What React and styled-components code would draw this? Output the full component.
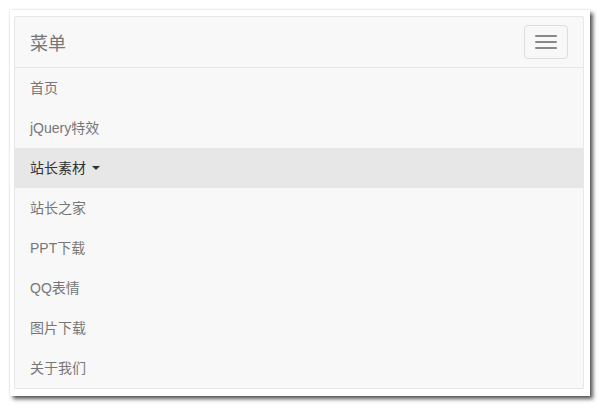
import styled, { createGlobalStyle } from 'styled-components';

const GlobalStyle = createGlobalStyle`
  html, body {
    margin: 0;
    padding: 0;
    background: #fff;
  }
  body {
    font-family: "Liberation Sans", Arial, "Noto Sans CJK SC", sans-serif;
    font-size: 14px;
    line-height: 20px;
    color: #333;
  }
`;

const items = ['首页', 'jQuery特效', '站长素材', '站长之家', 'PPT下载', 'QQ表情', '图片下载', '关于我们'];

export default function App() {
  return (
    <>
      <GlobalStyle />
      <Page>
        <Frame>
          <Navbar>
            <Header>
              <Brand>菜单</Brand>
              <Toggle aria-label="toggle">
                <Bar />
                <Bar />
                <Bar />
              </Toggle>
            </Header>
            <Nav>
              {items.map((label) => (
                <Item key={label} active={label === '站长素材'}>
                  {label}
                  {label === '站长素材' && <Caret />}
                </Item>
              ))}
            </Nav>
          </Navbar>
        </Frame>
      </Page>
    </>
  );
}

const Page = styled.div`
  padding: 10px;
  width: 601px;
  height: 407px;
  box-sizing: border-box;
`;

const Frame = styled.div`
  width: 580px;
  height: 386px;
  box-sizing: border-box;
  background: #fff;
  padding: 6px 6px 0 4px;
  box-shadow: 0 0 2px rgba(0, 0, 0, 0.15), 3px 3px 4px rgba(0, 0, 0, 0.65);
`;

const Navbar = styled.div`
  background: #f8f8f8;
  border: 1px solid #e7e7e7;
  border-radius: 2px;
`;

const Header = styled.div`
  height: 50px;
  display: flex;
  align-items: center;
  justify-content: space-between;
  padding: 0 15px;
  border-bottom: 1px solid #e7e7e7;
`;

const Brand = styled.span`
  font-size: 18px;
  color: #777;
  font-family: "Noto Sans CJK SC", sans-serif;
`;

const Toggle = styled.button`
  width: 44px;
  height: 34px;
  box-sizing: border-box;
  border: 1px solid #ddd;
  border-radius: 4px;
  background: transparent;
  display: flex;
  flex-direction: column;
  align-items: center;
  justify-content: center;
  gap: 4px;
  padding: 0;
`;

const Bar = styled.span`
  display: block;
  width: 22px;
  height: 2px;
  border-radius: 1px;
  background: #888;
`;

const Nav = styled.div`
  display: flex;
  flex-direction: column;
`;

const Item = styled.div`
  height: 40px;
  padding: 0 15px;
  display: flex;
  align-items: center;
  color: ${(p) => (p.active ? '#333' : '#777')};
  background: ${(p) => (p.active ? '#e7e7e7' : 'transparent')};
`;

const Caret = styled.span`
  display: inline-block;
  margin-left: 6px;
  width: 0;
  height: 0;
  border-top: 4px solid #333;
  border-left: 4px solid transparent;
  border-right: 4px solid transparent;
`;
